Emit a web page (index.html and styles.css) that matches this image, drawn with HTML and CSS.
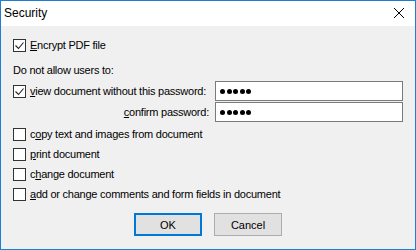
FILE: index.html
```html
<!DOCTYPE html>
<html>
<head>
<meta charset="utf-8">
<link rel="stylesheet" href="styles.css">
</head>
<body>
<div class="window">
  <div class="titlebar">
    <span class="title">Security</span>
    <svg class="close" width="12" height="12" viewBox="0 0 12 12"><path d="M1 1 L11 11 M11 1 L1 11" stroke="#000" stroke-width="1" fill="none"/></svg>
  </div>
  <div class="content">
    <label class="row check-row first">
      <span class="box checked"><svg width="11" height="11" viewBox="0 0 11 11"><path d="M1.5 5.5 L4.5 8.5 L9.5 2.5" stroke="#222" stroke-width="1.1" fill="none"/></svg></span>
      <span><u>E</u>ncrypt PDF file</span>
    </label>
    <div class="section-label">Do not allow users to:</div>
    <div class="pw-grid">
      <label class="check-row pw-label">
        <span class="box checked"><svg width="11" height="11" viewBox="0 0 11 11"><path d="M1.5 5.5 L4.5 8.5 L9.5 2.5" stroke="#222" stroke-width="1.1" fill="none"/></svg></span>
        <span><u>v</u>iew document without this password:</span>
      </label>
      <div class="pw-input"><span class="dots"><i></i><i></i><i></i><i></i><i></i></span></div>
      <span class="confirm-label"><u>c</u>onfirm password:</span>
      <div class="pw-input"><span class="dots"><i></i><i></i><i></i><i></i><i></i></span></div>
    </div>
    <div class="perm-list">
      <label class="check-row"><span class="box"></span><span>c<u>o</u>py text and images from document</span></label>
      <label class="check-row"><span class="box"></span><span><u>p</u>rint document</span></label>
      <label class="check-row"><span class="box"></span><span>c<u>h</u>ange document</span></label>
      <label class="check-row"><span class="box"></span><span><u>a</u>dd or change comments and form fields in document</span></label>
    </div>
    <div class="buttons">
      <button class="btn default">OK</button>
      <button class="btn">Cancel</button>
    </div>
  </div>
</div>
</body>
</html>
```
FILE: styles.css
```css
html, body {
  margin: 0;
  padding: 0;
}
body {
  width: 416px;
  height: 250px;
  overflow: hidden;
  font-family: "Liberation Sans", Arial, sans-serif;
  font-size: 11px;
  letter-spacing: -0.24px;
  color: #000;
}
.window {
  box-sizing: border-box;
  width: 416px;
  height: 250px;
  border: 1px solid #1e7fd2;
  background: #f0f0f0;
  display: flex;
  flex-direction: column;
}
.titlebar {
  height: 25px;
  background: #fff;
  display: flex;
  align-items: center;
  justify-content: space-between;
  padding: 0 10px 0 3px;
  flex: none;
}
.title {
  font-size: 12px;
  letter-spacing: 0;
  font-family: "Liberation Sans", Arial, sans-serif;
  margin-top: -1px;
}
.close {
  margin-top: -2px;
}
.content {
  padding: 13px 0 0 12px;
  display: flex;
  flex-direction: column;
}
.check-row {
  display: flex;
  align-items: center;
  gap: 4px;
  height: 13px;
  line-height: 13px;
  white-space: nowrap;
}
.box {
  box-sizing: border-box;
  width: 13px;
  height: 13px;
  border: 1px solid #333;
  background: #fff;
  display: flex;
  align-items: center;
  justify-content: center;
  flex: none;
}
.section-label {
  margin-top: 12px;
  height: 13px;
  line-height: 13px;
}
.pw-grid {
  margin-top: 4px;
  display: grid;
  grid-template-columns: 202px 188px;
  column-gap: 0;
  row-gap: 1px;
  align-items: center;
}
.pw-label {
  height: 20px;
}
.confirm-label {
  justify-self: end;
  padding-right: 6px;
}
.pw-input {
  box-sizing: border-box;
  height: 20px;
  border: 1px solid #7a7a7a;
  background: #fff;
  display: flex;
  align-items: center;
  padding-left: 4px;
}
.dots {
  display: flex;
  gap: 1.5px;
}
.dots i {
  width: 5px;
  height: 5px;
  border-radius: 50%;
  background: #000;
}
.perm-list {
  margin-top: 6px;
  display: flex;
  flex-direction: column;
  gap: 7px;
}
.buttons {
  margin-top: 12px;
  display: flex;
  gap: 12px;
  padding-left: 121px;
}
.btn {
  box-sizing: border-box;
  width: 68px;
  height: 23px;
  background: #e1e1e1;
  border: 1px solid #adadad;
  font-family: "Liberation Sans", Arial, sans-serif;
  font-size: 11px;
  color: #000;
  padding: 0;
}
.btn.default {
  border-color: #0078d7;
  box-shadow: inset 0 0 0 1px #0078d7;
}
```
